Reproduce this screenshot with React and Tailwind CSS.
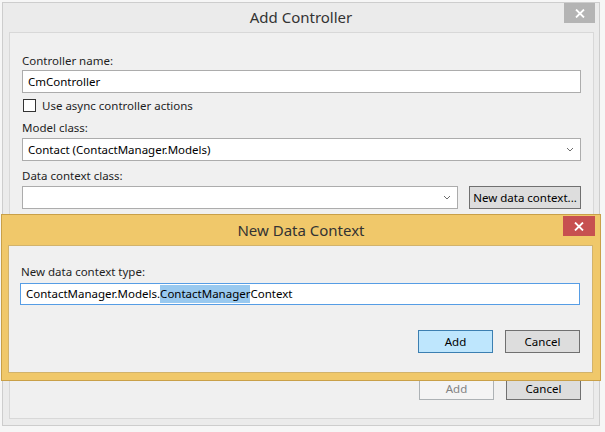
import React from 'react';

const font = { fontFamily: '"Noto Sans", "Open Sans", sans-serif' };

const CloseX = () => (
  <svg width="10" height="9" viewBox="0 0 10 9">
    <path d="M1 0.5 L9 8.5 M9 0.5 L1 8.5" stroke="#fff" strokeWidth="1.8" />
  </svg>
);

const Chevron = () => (
  <svg width="8" height="5" viewBox="0 0 8 5">
    <path d="M1 1 L4 4 L7 1" stroke="#6d6d6d" strokeWidth="1" fill="none" />
  </svg>
);

const Button = ({ children, primary, disabled, className = '' }) => (
  <div
    className={`w-[75px] h-[23px] flex items-center justify-center border text-[11.5px] ${
      primary
        ? 'bg-[#bee6fd] border-[#3c7fb1] text-black'
        : disabled
        ? 'bg-[#f4f4f4] border-[#adb2b5] text-[#838383]'
        : 'bg-[#dddddd] border-[#707070] text-black'
    } ${className}`}
  >
    {children}
  </div>
);

const Combo = ({ value, className = '' }) => (
  <div className={`h-[23px] border border-[#acacac] bg-white flex items-center pl-[5px] pr-[6px] text-[11.5px] text-black ${className}`}>
    <span className="flex-1">{value}</span>
    <Chevron />
  </div>
);

export default function App() {
  return (
    <div className="w-[605px] h-[432px] bg-[#f6f6f6] relative overflow-hidden text-[#1e1e1e]" style={font}>
      {/* Add Controller window */}
      <div className="ml-[2px] mt-[2px] w-[598px] h-[424px] border border-[#cdcdcd] bg-[#ebebeb] flex flex-col">
        <div className="h-[29px] relative flex items-center justify-center">
          <span className="text-[15px] text-[#333333]">Add Controller</span>
          <div className="absolute right-[4px] top-0 w-[31px] h-[20px] bg-[#b4b4b4] flex items-center justify-center">
            <CloseX />
          </div>
        </div>
        <div className="ml-[6px] mr-[5px] mb-[6px] flex-1 border border-[#d8d8d8] bg-[#f0f0f0] px-[12px] pt-[20px] pb-[18px] flex flex-col">
          <div className="h-[16px] leading-[16px] text-[11.5px]">Controller name:</div>
          <div className="mt-[1px] h-[23px] border border-[#acacac] bg-white flex items-center pl-[5px] text-[11.5px] text-black">
            CmController
          </div>
          <div className="mt-[4px] h-[17px] flex items-center gap-[6px] text-[11.5px]">
            <div className="w-[13px] h-[13px] border border-[#333333] bg-white ml-[1px]" />
            <span>Use async controller actions</span>
          </div>
          <div className="mt-[6px] h-[16px] leading-[16px] text-[11.5px]">Model class:</div>
          <Combo value="Contact (ContactManager.Models)" className="mt-[2px]" />
          <div className="mt-[7px] h-[16px] leading-[16px] text-[11.5px]">Data context class:</div>
          <div className="mt-[2px] flex gap-[11px]">
            <Combo value="" className="flex-1" />
            <div className="w-[112px] h-[23px] border border-[#707070] bg-[#dddddd] flex items-center justify-center text-[11.5px] text-black">
              New data context...
            </div>
          </div>
          <div className="mt-auto flex justify-end gap-[12px]">
            <Button disabled>Add</Button>
            <Button>Cancel</Button>
          </div>
        </div>
      </div>

      {/* New Data Context dialog overlay */}
      <div className="absolute left-[1px] top-[214px] w-[600px] h-[167px] border border-[#c9a048] bg-[#f0c86a] flex flex-col">
        <div className="h-[30px] relative flex items-center justify-center">
          <span className="text-[15px] text-[#333333]">New Data Context</span>
          <div className="absolute right-[5px] top-[1px] w-[32px] h-[20px] bg-[#c75050] flex items-center justify-center">
            <CloseX />
          </div>
        </div>
        <div className="ml-[6px] mr-[7px] mb-[7px] flex-1 border border-[#d2b36c] bg-[#f0f0f0] pl-[11px] pr-[12px] pt-[18px] flex flex-col">
          <div className="h-[16px] leading-[16px] text-[11.5px] pl-[1px]">New data context type:</div>
          <div className="mt-[3px] h-[22px] border border-[#569de5] bg-white flex items-center pl-[5px] text-[11.5px] text-black">
            <span>ContactManager.Models.</span>
            <span className="bg-[#99c9ef]">ContactManager</span>
            <span>Context</span>
          </div>
          <div className="mt-[25px] flex justify-end gap-[12px]">
            <Button primary>Add</Button>
            <Button>Cancel</Button>
          </div>
        </div>
      </div>
    </div>
  );
}
